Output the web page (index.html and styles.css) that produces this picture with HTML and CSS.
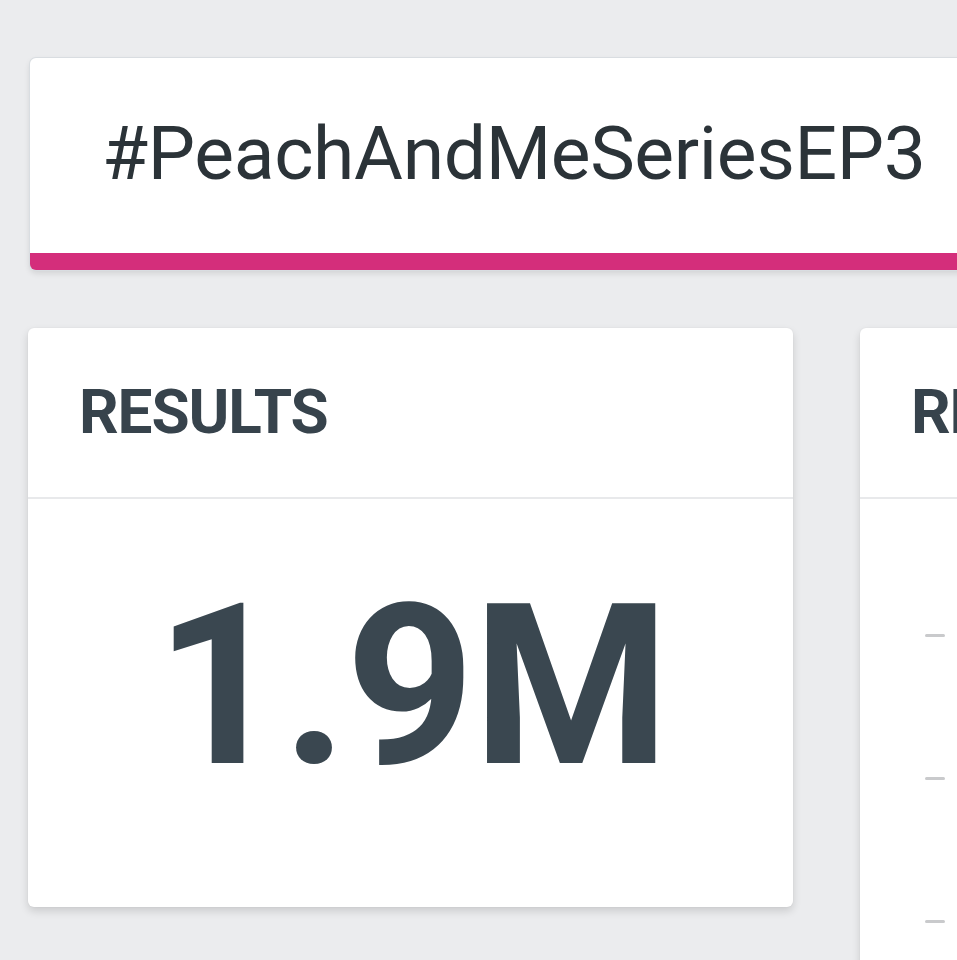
FILE: index.html
```html
<!DOCTYPE html>
<html lang="en">
<head>
<meta charset="utf-8">
<title>#PeachAndMeSeriesEP3</title>
<link rel="stylesheet" href="styles.css">
</head>
<body>
<main class="page">
  <section class="topic-card">
    <h1 class="topic-title">#PeachAndMeSeriesEP3</h1>
  </section>

  <div class="stats">
    <section class="stat-card">
      <header class="stat-head"><h2>RESULTS</h2></header>
      <div class="stat-body">
        <span class="stat-value">1.9M</span>
      </div>
    </section>

    <section class="stat-card stat-card--wide">
      <header class="stat-head"><h2>REACH</h2></header>
      <ul class="stat-list">
        <li><span class="dash"></span></li>
        <li><span class="dash"></span></li>
        <li><span class="dash"></span></li>
      </ul>
    </section>
  </div>
</main>
</body>
</html>
```

FILE: styles.css
```css
html, body {
  margin: 0;
  padding: 0;
  background: #ebecee;
  overflow: hidden;
}

body {
  font-family: Roboto, "Liberation Sans", Arial, sans-serif;
  color: #38444d;
  width: 957px;
  height: 960px;
}

.page {
  padding: 58px 0 0 28px;
  width: 1800px;
}

.topic-card {
  margin-left: 2px;
  width: 1200px;
  height: 212px;
  background: #fff;
  border-radius: 6px;
  border-bottom: 17px solid #d42e7b;
  box-shadow: 0 0 0 1px #d9dde1, 0 3px 6px rgba(0, 0, 0, 0.12);
  box-sizing: border-box;
  display: flex;
  align-items: center;
}

.topic-title {
  margin: 0 0 0 72px;
  font-weight: 400;
  font-size: 75px;
  line-height: 1;
  color: #2b3338;
  letter-spacing: -0.35px;
  padding-bottom: 4px;
}

.stats {
  display: flex;
  gap: 67px;
  margin-top: 58px;
}

.stat-card {
  width: 765px;
  height: 579px;
  background: #fff;
  border-radius: 6px;
  box-shadow: 0 4px 8px rgba(0, 0, 0, 0.14), 0 0 2px rgba(0, 0, 0, 0.06);
  display: flex;
  flex-direction: column;
  flex: none;
}

.stat-card--wide {
  height: 700px;
  width: 900px;
}

.stat-head {
  height: 169px;
  border-bottom: 2px solid #e8e9eb;
  display: flex;
  align-items: center;
  padding-left: 51px;
  flex: none;
}

.stat-head h2 {
  margin: 0;
  font-size: 62px;
  font-weight: 700;
  color: #37434c;
  line-height: 1;
  letter-spacing: -1.1px;
  padding-bottom: 2px;
}

.stat-body {
  flex: 1;
  display: flex;
  align-items: center;
  justify-content: center;
  padding-bottom: 34px;
}

.stat-value {
  font-size: 225px;
  font-weight: 700;
  color: #3a4750;
  line-height: 1;
  letter-spacing: -2px;
  padding-left: 2px;
}

.stat-list {
  list-style: none;
  margin: 0;
  padding: 0 0 0 65px;
}

.stat-list li {
  height: 143px;
  display: flex;
  align-items: center;
}

.stat-list li:first-child {
  margin-top: 65px;
}

.dash {
  display: block;
  width: 20px;
  height: 3px;
  border-radius: 2px;
  background: #c9cacc;
}
```
